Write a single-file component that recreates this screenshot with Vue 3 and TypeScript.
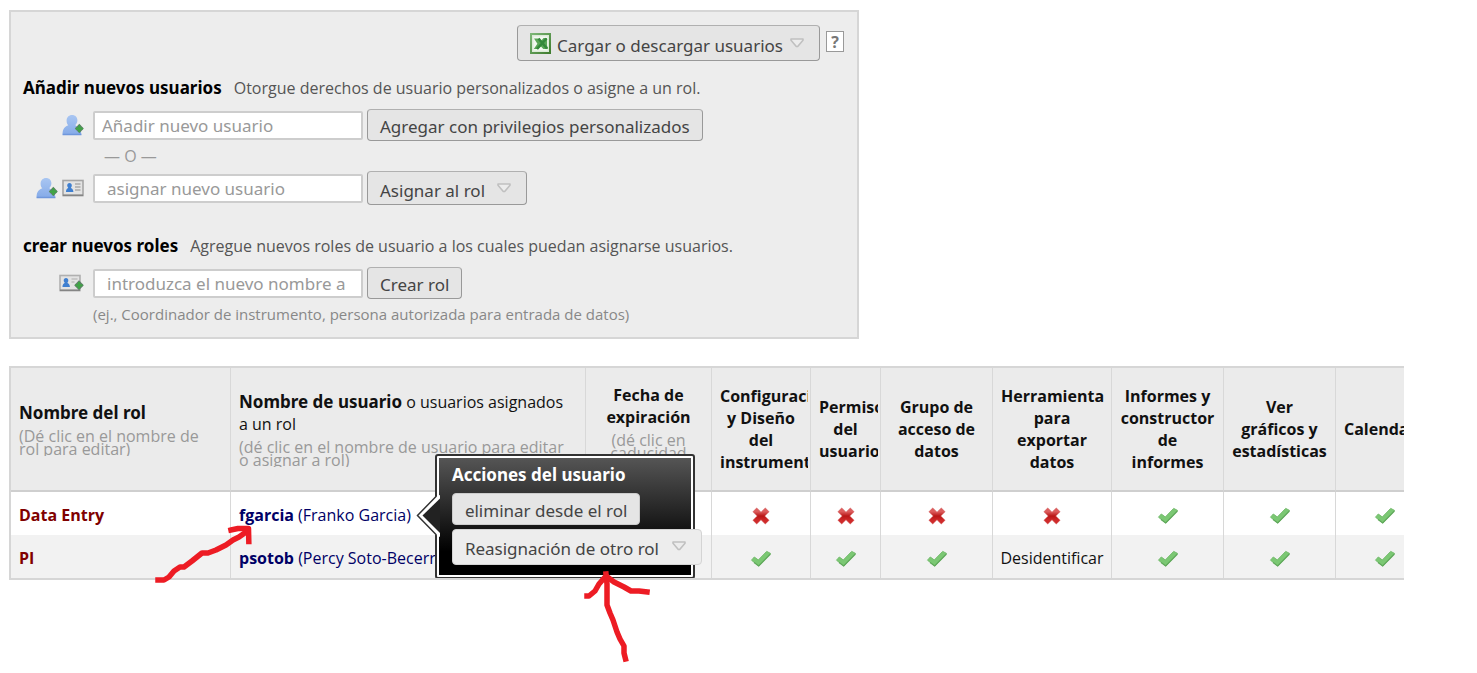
<script setup lang="ts">
import { ref } from 'vue'

type Access = 'yes' | 'no' | string

interface RoleRow {
  role: string
  login: string
  fullName: string
  access: Access[]
}

const columns: string[][] = [
  ['Configuración', 'y Diseño', 'del', 'instrumento'],
  ['Permisos', 'del', 'usuario'],
  ['Grupo de', 'acceso de', 'datos'],
  ['Herramienta', 'para', 'exportar', 'datos'],
  ['Informes y', 'constructor', 'de', 'informes'],
  ['Ver', 'gráficos y', 'estadísticas'],
  ['Calendario'],
]

const rows: RoleRow[] = [
  {
    role: 'Data Entry',
    login: 'fgarcia',
    fullName: 'Franko Garcia',
    access: ['no', 'no', 'no', 'no', 'yes', 'yes', 'yes'],
  },
  {
    role: 'PI',
    login: 'psotob',
    fullName: 'Percy Soto-Becerra',
    access: ['yes', 'yes', 'yes', 'Desidentificar', 'yes', 'yes', 'yes'],
  },
]

const openMenu = ref('fgarcia')
const newUser = ref('')
const assignUser = ref('')
const newRole = ref('')
</script>

<template>
  <main class="page">
    <svg class="defs" aria-hidden="true">
      <defs>
        <linearGradient id="g-user" x1="0" y1="0" x2="0" y2="1">
          <stop offset="0" stop-color="#a9c6f2" />
          <stop offset="1" stop-color="#86abe8" />
        </linearGradient>
        <linearGradient id="g-red" x1="0" y1="0" x2="0" y2="1">
          <stop offset="0" stop-color="#dc5c5c" />
          <stop offset="0.5" stop-color="#b91616" />
          <stop offset="1" stop-color="#cf2a2a" />
        </linearGradient>
        <linearGradient id="g-xls" x1="0" y1="0" x2="1" y2="1">
          <stop offset="0" stop-color="#7fb97a" />
          <stop offset="1" stop-color="#3d7a2c" />
        </linearGradient>
        <symbol id="i-user" viewBox="0 0 22 22">
          <path d="M10 1c3.300 0 5.400 2.200 5.400 5.300 0 2-.9 3.600-2 4.700 0 1.500 5.600 1.700 6 9.500H.6c0-4 .6-7 5.700-9.200-1-.8-1.700-2.500-1.700-4.500C4.600 3.200 6.800 1 10 1z" fill="url(#g-user)" />
          <path d="M.6 20.500h18.800" stroke="#6f97dc" stroke-width="1.500" />
          <path d="M17.300 9.800 21.800 14.600 17.300 19.300 12.800 14.600z" fill="#5f7f68" />
          <path d="M16.200 11.300h2.200v2.200h2.300v2.200h-2.300v2.200h-2.200v-2.200h-2.300v-2.200h2.300z" fill="#3fa545" />
        </symbol>
        <symbol id="i-card" viewBox="0 0 22 18">
          <rect x="1" y="1.500" width="20" height="15" fill="#e3e3e3" stroke="#a5a5a5" stroke-width="1.600" />
          <path d="M1 16.300h20" stroke="#858585" stroke-width="1.600" />
          <path d="M7.500 4c1.500 0 2.300 1 2.300 2.400 0 1-.4 1.600-.9 2.100.2 1 2.300 1 2.500 4.500H4c.1-3.500 2-3.500 2.200-4.500-.6-.5-1-1.200-1-2.100C5.200 5 6.100 4 7.500 4z" fill="#3f7fd0" />
          <path d="M13 5h5.500M13 8h5.500M13 11h5.500" stroke="#aaa" stroke-width="1.400" />
        </symbol>
        <symbol id="i-card-add" viewBox="0 0 25 18">
          <rect x="1" y="1.500" width="20" height="15" fill="#e3e3e3" stroke="#b0b0b0" stroke-width="1.600" />
          <path d="M1 16.300h20" stroke="#858585" stroke-width="1.600" />
          <path d="M7 4c1.500 0 2.300 1 2.300 2.400 0 1-.4 1.600-.9 2.100.2 1 2.300 1 2.500 4.500H3.500c.1-3.500 2-3.500 2.200-4.500-.6-.5-1-1.200-1-2.100C4.700 5 5.600 4 7 4z" fill="#3f7fd0" />
          <path d="M12.500 5h6M12.500 8h3" stroke="#c0c0c0" stroke-width="1.400" />
          <path d="M20 6.300 24.800 11.300 20 16.300 15.200 11.300z" fill="#5f7f68" />
          <path d="M18.900 7.900h2.200v2.300h2.300v2.200h-2.300v2.300h-2.200v-2.300h-2.300v-2.200h2.300z" fill="#3fa545" />
        </symbol>
        <symbol id="i-caret" viewBox="0 0 16 12">
          <path d="M2 2h12v1.200L8.700 9.500H7.300L2 3.200z" fill="#ececec" stroke="#c0c0c0" stroke-width="1.600" stroke-linejoin="round" />
        </symbol>
        <symbol id="i-check" viewBox="0 0 22 18">
          <path d="M1.500 10.200 4.300 7l4 3L16.700 1.400l3.800 2L8.800 16z" fill="#7bc873" stroke="#74bb6d" stroke-width="1" stroke-linejoin="round" />
          <path d="M4 12.500 8.700 16 20.500 4" fill="none" stroke="#5fa85a" stroke-width="1.100" />
        </symbol>
        <symbol id="i-cross" viewBox="0 0 18 18">
          <path d="M4.700 4.700l8.600 8.600M13.300 4.700l-8.600 8.600" fill="none" stroke="#dd8080" stroke-width="6" stroke-linecap="square" stroke-linejoin="round" />
          <path d="M4.700 4.700l8.600 8.600M13.300 4.700l-8.600 8.600" fill="none" stroke="url(#g-red)" stroke-width="5" stroke-linecap="square" />
        </symbol>
      </defs>
    </svg>

    <section class="panel">
      <div class="toolbar">
        <button type="button" class="btn btn-tall">
          <svg class="xls" viewBox="0 0 21 21" aria-hidden="true">
            <rect width="21" height="21" fill="url(#g-xls)" />
            <rect x="2" y="2" width="17" height="17" fill="#dcebd8" />
            <rect x="3.500" y="3.500" width="14" height="14" fill="#f4f9f2" />
            <path d="M4 5.500h4.300l2.500 2.700L13.500 5H17v7.500L18 16h-4.700l-2.600-2.800L8 16H3.800l3.600-5.200z" fill="#5aa657" />
            <path d="M8.500 5.500 17 15.500M16.500 5.500 7 16" stroke="#35883c" stroke-width="2.600" />
          </svg>
          <span>Cargar o descargar usuarios</span>
          <svg class="caret" aria-hidden="true"><use href="#i-caret" /></svg>
        </button>
        <button type="button" class="help" aria-label="Ayuda">?</button>
      </div>

      <p class="lead">
        <label class="title" for="new-user">Añadir nuevos usuarios</label>
        <span>Otorgue derechos de usuario personalizados o asigne a un rol.</span>
      </p>
      <div class="field">
        <span class="icons"><svg class="user" aria-hidden="true"><use href="#i-user" /></svg></span>
        <input id="new-user" v-model="newUser" type="text" placeholder="Añadir nuevo usuario" />
        <button type="button" class="btn">Agregar con privilegios personalizados</button>
      </div>
      <div class="or">— O —</div>
      <div class="field">
        <span class="icons">
          <svg class="user" aria-hidden="true"><use href="#i-user" /></svg>
          <svg class="card" aria-hidden="true"><use href="#i-card" /></svg>
        </span>
        <input v-model="assignUser" class="indent" type="text" aria-label="asignar nuevo usuario" placeholder="asignar nuevo usuario" />
        <button type="button" class="btn btn-role">
          <span>Asignar al rol</span>
          <svg class="caret" aria-hidden="true"><use href="#i-caret" /></svg>
        </button>
      </div>

      <p class="lead lead-roles">
        <label class="title" for="new-role">crear nuevos roles</label>
        <span>Agregue nuevos roles de usuario a los cuales puedan asignarse usuarios.</span>
      </p>
      <div class="field">
        <span class="icons"><svg class="card-add" aria-hidden="true"><use href="#i-card-add" /></svg></span>
        <input id="new-role" v-model="newRole" class="indent" type="text" placeholder="introduzca el nuevo nombre a" />
        <button type="button" class="btn">Crear rol</button>
      </div>
      <p class="note">(ej., Coordinador de instrumento, persona autorizada para entrada de datos)</p>
    </section>

    <div class="grid">
      <table>
        <colgroup>
          <col class="c-role" />
          <col class="c-user" />
          <col class="c-date" />
          <col class="c-sm" />
          <col class="c-xs" />
          <col class="c-md" />
          <col class="c-lg" />
          <col class="c-md" />
          <col class="c-md" />
          <col class="c-sm" />
        </colgroup>
        <thead>
          <tr>
            <th class="left">
              <div class="head">
                <b class="big">Nombre del rol</b>
                <small>(Dé clic en el nombre de<br />rol para editar)</small>
              </div>
            </th>
            <th class="left">
              <div class="head">
                <span><b class="big">Nombre de usuario</b> o usuarios asignados<br />a un rol</span>
                <small>(dé clic en el nombre de usuario para editar<br />o asignar a rol)</small>
              </div>
            </th>
            <th>
              <div class="head">
                <b>Fecha de<br />expiración</b>
                <small class="tall">(dé clic en<br />caducidad</small>
              </div>
            </th>
            <th v-for="col in columns" :key="col[0]">
              <div class="head">
                <b v-for="line in col" :key="line">{{ line }}</b>
              </div>
            </th>
          </tr>
        </thead>
        <tbody>
          <tr v-for="row in rows" :key="row.login">
            <td class="left"><a class="role" href="#">{{ row.role }}</a></td>
            <td class="left">
              <span class="user-cell">
                <a class="name" href="#"><b>{{ row.login }}</b> ({{ row.fullName }})</a>
                <div v-if="openMenu === row.login" class="popup">
                  <svg class="pointer" viewBox="0 0 24 44" aria-hidden="true">
                    <path d="M24 1 20 2.500 1 21.500 20 41 24 43z" fill="#fff" />
                    <path d="M24 4.500 6.500 21.500 24 39z" fill="#222" />
                    <path d="M20 0v2.500L1.500 21.500 20 40.500V44" fill="none" stroke="#333" stroke-width="1.500" />
                  </svg>
                  <div class="popup-body">
                    <strong>Acciones del usuario</strong>
                    <button type="button" class="btn btn-menu">eliminar desde el rol</button>
                    <button type="button" class="btn btn-menu btn-light">
                      <span>Reasignación de otro rol</span>
                      <svg class="caret" aria-hidden="true"><use href="#i-caret" /></svg>
                    </button>
                  </div>
                </div>
              </span>
            </td>
            <td></td>
            <td v-for="(a, i) in row.access" :key="i">
              <svg v-if="a === 'yes'" class="check" role="img" aria-label="Sí"><use href="#i-check" /></svg>
              <svg v-else-if="a === 'no'" class="cross" role="img" aria-label="No"><use href="#i-cross" /></svg>
              <span v-else>{{ a }}</span>
            </td>
          </tr>
        </tbody>
      </table>
    </div>

    <svg class="marks" viewBox="150 505 510 160" aria-hidden="true">
      <g fill="none" stroke="#ed1c24" stroke-width="5.500" stroke-linejoin="round" stroke-linecap="square">
        <path d="M158 580h6l5-3 5-6 6-4h4l8-6 10-8h6l8-3 10-5 7-5 6-3 7-5" />
        <path d="M231 530l7-1.500h10.500l.3 13" />
        <path d="M606 574l1 10v21l3 8 3 7 4 12 3 7 4 7v7l1.500 6" />
        <path d="M587 596h2l6-5 4-7 7-8 8 6 10 5 7 4h8l8 1" />
      </g>
    </svg>
  </main>
</template>

<style>
body {
  margin: 0;
  background: #fff;
}
</style>

<style scoped>
.page {
  position: relative;
  box-sizing: border-box;
  padding: 10px 73px 92px 9px;
  font-family: "Open Sans", "Noto Sans", sans-serif;
  font-size: 16px;
  line-height: 22px;
  color: #111;
}
.defs {
  position: absolute;
  width: 0;
  height: 0;
}
.panel {
  box-sizing: border-box;
  max-width: 850px;
  padding: 13px 13px 12px 12px;
  border: 2px solid #d6d6d6;
  background: #ededed;
}
.toolbar {
  display: flex;
  justify-content: flex-end;
  align-items: flex-start;
  gap: 6px;
}
.btn {
  display: inline-flex;
  align-items: center;
  box-sizing: border-box;
  height: 32px;
  padding: 4px 12px 0;
  border: 1px solid #999;
  border-top-color: #b0b0b0;
  border-radius: 4px;
  background: #e5e5e5;
  color: #444;
  font-family: "Noto Sans", "Open Sans", sans-serif;
  font-size: 17px;
  line-height: 22px;
  white-space: nowrap;
  cursor: pointer;
}
.btn-tall {
  height: 36px;
  padding-top: 5px;
}
.btn-role {
  height: 34px;
  padding-top: 6px;
}
.btn .caret {
  width: 16px;
  height: 12px;
  margin: 0 2px 6px 6px;
}
.btn-role .caret {
  margin-left: 11px;
}
.xls {
  width: 21px;
  height: 21px;
  margin: 0 6px 4px 0;
}
.help {
  box-sizing: border-box;
  width: 18px;
  height: 21px;
  margin-top: 6px;
  padding: 0;
  border: 1px solid #999;
  background: #fff;
  color: #777;
  font: bold 16px/18px "Open Sans", sans-serif;
}
.lead {
  margin: 15px 0 9px;
  line-height: 24px;
  color: #555;
}
.lead-roles {
  margin-top: 29px;
}
.title {
  margin-right: 12px;
  font-family: "Noto Sans", "Open Sans", sans-serif;
  font-size: 17px;
  font-weight: 700;
  color: #000;
}
.field {
  display: flex;
  align-items: center;
  gap: 4px;
}
.icons {
  display: flex;
  justify-content: flex-end;
  align-items: center;
  gap: 4px;
  width: 57px;
  margin: 0 5px 0 4px;
}
.icons svg {
  flex: none;
}
.user {
  width: 22px;
  height: 22px;
}
.card {
  width: 22px;
  height: 18px;
}
.card-add {
  width: 25px;
  height: 18px;
}
.field input {
  box-sizing: border-box;
  width: 270px;
  height: 29px;
  padding: 0 7px;
  border: 2px solid #cdcdcd;
  border-radius: 2px;
  background: #fff;
  color: #333;
  font-family: "Noto Sans", "Open Sans", sans-serif;
  font-size: 17px;
}
.field input.indent {
  padding-left: 12px;
}
.field input::placeholder {
  color: #999;
  opacity: 1;
}
.or {
  margin: 4px 0 4px 81px;
  color: #999;
}
.note {
  margin: 4px 0 0 70px;
  font-size: 15px;
  color: #888;
}
.grid {
  margin-top: 27px;
  border: 2px solid #d6d6d6;
  border-right: 0;
  overflow: hidden;
}
table {
  width: 1424px;
  table-layout: fixed;
  border-collapse: separate;
  border-spacing: 0;
}
.c-role { width: 220px; }
.c-user { width: 355px; }
.c-date { width: 126px; }
.c-xs { width: 70px; }
.c-sm { width: 99px; }
.c-md { width: 112px; }
.c-lg { width: 119px; }
th,
td {
  box-sizing: border-box;
  padding: 0 2px;
  border-right: 1px solid #d8d8d8;
  text-align: center;
  vertical-align: middle;
  font-weight: 400;
}
th {
  height: 124px;
  border-bottom: 2px solid #cfcfcf;
  background: #ebebeb;
}
td {
  height: 43px;
  padding-top: 2px;
  background: #fff;
}
tbody tr:nth-child(2) td {
  background: #f2f2f2;
}
th.left {
  text-align: left;
}
td.left {
  padding-left: 8px;
  text-align: left;
}
.head {
  padding: 0 6px;
  overflow: hidden;
  white-space: nowrap;
}
.head b {
  display: block;
}
.head span b {
  display: inline;
}
.head .big {
  font-family: "Noto Sans", "Open Sans", sans-serif;
  font-size: 17px;
}
small {
  display: block;
  height: 26px;
  margin-top: 6px;
  overflow: hidden;
  font-size: 16px;
  line-height: 13px;
  color: #999;
  white-space: nowrap;
}
small.tall {
  height: 40px;
}
a {
  text-decoration: none;
}
.role {
  font-weight: 700;
  color: #800000;
}
.name {
  color: #000066;
}
.user-cell {
  position: relative;
  display: inline-block;
  white-space: nowrap;
}
.check {
  width: 22px;
  height: 18px;
  vertical-align: middle;
}
.cross {
  width: 18px;
  height: 18px;
  vertical-align: middle;
}
.popup {
  position: absolute;
  z-index: 2;
  top: -50px;
  left: calc(100% + 24px);
  box-sizing: border-box;
  width: 260px;
  padding: 2px;
  border: 2px solid #333;
  border-radius: 3px;
  background: #fff;
}
.popup-body {
  display: flex;
  flex-direction: column;
  align-items: flex-start;
  gap: 4px;
  padding: 6px 13px 10px;
  background: linear-gradient(#555, #000 80%);
}
.popup strong {
  margin-bottom: 3px;
  font-family: "Noto Sans", "Open Sans", sans-serif;
  font-size: 17px;
  color: #fff;
}
.pointer {
  position: absolute;
  top: 38px;
  left: -21px;
  width: 24px;
  height: 44px;
}
.btn-menu {
  border-color: #ccc;
}
.btn-light {
  height: 36px;
  background: #ededed;
  border-color: #d4d4d4;
}
.btn-light .caret {
  margin-left: 12px;
}
.marks {
  position: absolute;
  z-index: 3;
  top: 505px;
  left: 150px;
  width: 510px;
  height: 160px;
  pointer-events: none;
}
</style>
